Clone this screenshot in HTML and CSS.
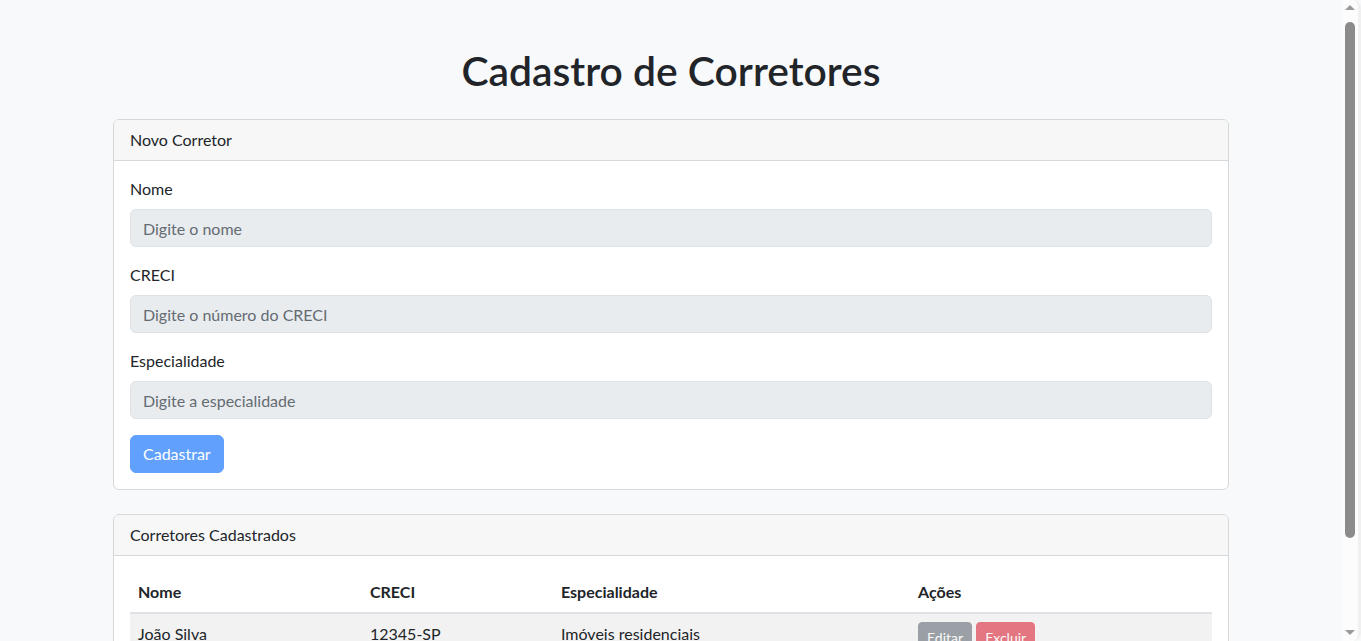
FILE: index.html
```html
<!DOCTYPE html>
<html lang="pt-BR">
<head>
<meta charset="utf-8">
<title>Cadastro de Corretores</title>
<link rel="stylesheet" href="styles.css">
</head>
<body>
<div class="container">
  <h1 class="title">Cadastro de Corretores</h1>

  <div class="card">
    <div class="card-header">Novo Corretor</div>
    <div class="card-body">
      <form class="form">
        <fieldset class="fieldset" disabled>
          <div class="field">
            <label class="form-label" for="nome">Nome</label>
            <input class="form-control" id="nome" type="text" placeholder="Digite o nome">
          </div>
          <div class="field">
            <label class="form-label" for="creci">CRECI</label>
            <input class="form-control" id="creci" type="text" placeholder="Digite o número do CRECI">
          </div>
          <div class="field">
            <label class="form-label" for="esp">Especialidade</label>
            <input class="form-control" id="esp" type="text" placeholder="Digite a especialidade">
          </div>
          <button class="btn btn-primary" type="submit">Cadastrar</button>
        </fieldset>
      </form>
    </div>
  </div>

  <div class="card">
    <div class="card-header">Corretores Cadastrados</div>
    <div class="card-body">
      <table class="table">
        <thead>
          <tr>
            <th class="col-nome">Nome</th>
            <th class="col-creci">CRECI</th>
            <th class="col-esp">Especialidade</th>
            <th class="col-acoes">Ações</th>
          </tr>
        </thead>
        <tbody>
          <tr class="striped">
            <td>João Silva</td>
            <td>12345-SP</td>
            <td>Imóveis residenciais</td>
            <td>
              <button class="btn btn-sm btn-secondary" disabled>Editar</button>
              <button class="btn btn-sm btn-danger" disabled>Excluir</button>
            </td>
          </tr>
        </tbody>
      </table>
    </div>
  </div>
</div>

<div class="scrollbar" aria-hidden="true">
  <span class="sb-arrow sb-up"></span>
  <span class="sb-thumb"></span>
  <span class="sb-arrow sb-down"></span>
</div>
</body>
</html>
```
FILE: styles.css
```css
*, *::before, *::after { box-sizing: border-box; }

html, body { margin: 0; }

body {
  background: #f8f9fa;
  color: #212529;
  font-family: Lato, "Liberation Sans", sans-serif;
  font-size: 16px;
  line-height: 24px;
  padding-right: 19px;
}

.container {
  max-width: 1140px;
  margin: 0 auto;
  padding: 47px 12px 48px;
}

.title {
  margin: 0 0 24px;
  font-size: 40.8px;
  font-weight: 600;
  line-height: 48px;
  text-align: center;
  color: #212529;
}

.card {
  background: #fff;
  border: 1px solid #d7d8d9;
  border-radius: 6px;
  margin-bottom: 24px;
}

.card-header {
  padding: 8px 16px;
  background: #f7f7f7;
  border-bottom: 1px solid #d7d8d9;
  border-radius: 5px 5px 0 0;
}

.card-body {
  padding: 16px;
}

.form { margin: 0; }

.fieldset {
  border: 0;
  margin: 0;
  padding: 0;
  min-width: 0;
}

.field { margin-bottom: 16px; }

.form-label {
  display: block;
  margin-bottom: 8px;
}

.form-control {
  display: block;
  width: 100%;
  height: 38px;
  padding: 6px 12px;
  font-family: inherit;
  font-size: 16px;
  line-height: 24px;
  color: #212529;
  background: #e9ecef;
  border: 1px solid #dee2e6;
  border-radius: 6px;
  margin: 0;
}

.form-control::placeholder { color: #646b72; opacity: 1; }

.btn {
  display: inline-block;
  font-family: inherit;
  font-size: 16px;
  line-height: 24px;
  padding: 6px 12px;
  border: 1px solid transparent;
  border-radius: 6px;
  color: #fff;
  margin: 0;
  vertical-align: middle;
}

.btn:disabled { opacity: 0.65; }

.btn-primary { background: #0d6efd; border-color: #0d6efd; }
.btn-secondary { background: #6c757d; border-color: #6c757d; }
.btn-danger { background: #dc3545; border-color: #dc3545; }

.btn-sm {
  padding: 4px 8px;
  font-size: 14px;
  line-height: 21px;
  border-radius: 4px;
}

.table {
  width: 100%;
  border-collapse: collapse;
  margin-bottom: 16px;
}

.table th, .table td {
  padding: 8px;
  text-align: left;
  vertical-align: top;
  border-bottom: 1px solid #dee2e6;
}

.table th { font-weight: 700; }

.table thead th { border-bottom: 2px solid #dee2e6; }

.striped td { background: #f2f2f2; }

.col-nome { width: 232px; }
.col-creci { width: 191px; }
.col-esp { width: 357px; }
.col-acoes { width: 302px; }

/* imitation of the browser scrollbar seen in the screenshot */
.scrollbar {
  position: fixed;
  top: 0;
  right: 0;
  bottom: 0;
  width: 19px;
  background: #fcfcfc;
  border-right: 3px solid #f0f0f0;
  border-radius: 0 8px 8px 0;
}

.sb-thumb {
  position: absolute;
  left: 3px;
  top: 22px;
  width: 10px;
  height: 516px;
  background: #8b8b8b;
  border-radius: 5px;
}

.sb-arrow {
  position: absolute;
  left: 3px;
  width: 0;
  height: 0;
  border-left: 5px solid transparent;
  border-right: 5px solid transparent;
}

.sb-up { top: 5px; border-bottom: 5px solid #9a9a9a; }
.sb-down { bottom: 6px; border-top: 5px solid #9a9a9a; }
```
